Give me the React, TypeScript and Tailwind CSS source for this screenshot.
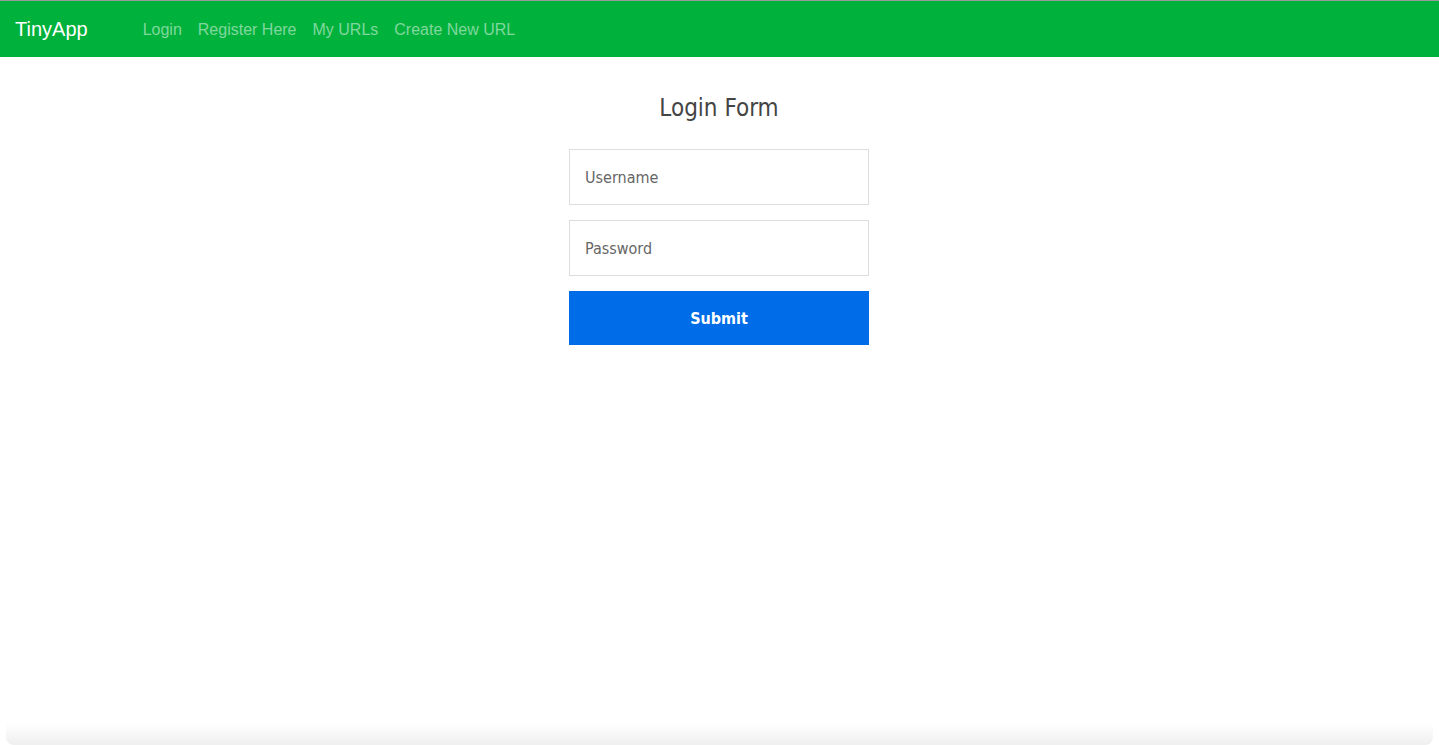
import React from "react";

export default function App() {
  return (
    <div className="min-h-[745px] h-[745px] flex flex-col bg-white overflow-hidden">
      <div className="h-px bg-[#9a9a9a]" />
      <nav className="h-[56px] bg-[#00b13b] flex items-center px-[15px] font-['Liberation_Sans',Arial,sans-serif]">
        <span className="text-white text-[20px] mr-[55px] leading-none">TinyApp</span>
        <div className="flex items-center gap-[16px] text-[16px] text-white/50 leading-none pt-px">
          <a className="cursor-pointer">Login</a>
          <a className="cursor-pointer">Register Here</a>
          <a className="cursor-pointer">My URLs</a>
          <a className="cursor-pointer">Create New URL</a>
        </div>
      </nav>
      <main className="flex-1 flex flex-col items-center pr-px font-['DejaVu_Sans_Condensed','DejaVu_Sans',Verdana,sans-serif]">
        <h1 className="mt-[36px] text-[24px] leading-[30px] text-[#444]">Login Form</h1>
        <form className="w-[300px] mt-[26px] flex flex-col gap-[15px]">
          <input
            placeholder="Username"
            className="h-[56px] border border-[#dddddd] px-[15px] text-[16px] placeholder:text-[#666] outline-none"
          />
          <input
            placeholder="Password"
            type="password"
            className="h-[56px] border border-[#dddddd] px-[15px] text-[16px] placeholder:text-[#666] outline-none"
          />
          <button
            type="button"
            className="h-[54px] bg-[#006ce8] text-white font-bold text-[16px] pt-[2px]"
          >
            Submit
          </button>
        </form>
      </main>
      <div className="h-[22px] bg-gradient-to-b from-white to-[#efefef] mx-[6px] rounded-b-[8px]" />
    </div>
  );
}
